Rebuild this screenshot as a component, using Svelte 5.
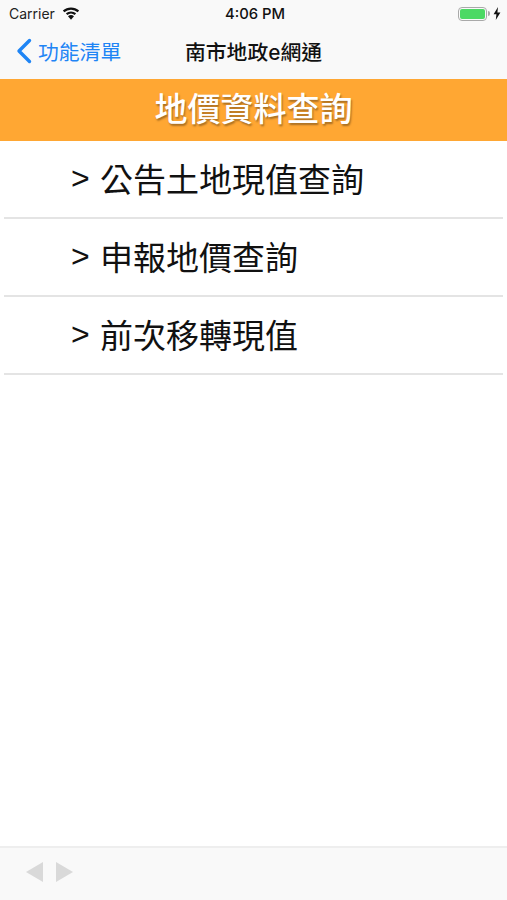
<script>
	const items = ['公告土地現值查詢', '申報地價查詢', '前次移轉現值'];
</script>

<div class="page">
	<header class="top">
		<div class="status">
			<div class="status-left">
				<span>Carrier</span>
				<svg class="wifi" width="18" height="13" viewBox="0 0 18 13" aria-hidden="true">
					<path d="M9 12.8 L12 9.2 A4.6 4.6 0 0 0 6 9.2 Z" fill="#111" />
					<path d="M4.6 7.2 A6.8 6.8 0 0 1 13.4 7.2" fill="none" stroke="#111" stroke-width="2.2" />
					<path d="M1.6 4.4 A11 11 0 0 1 16.4 4.4" fill="none" stroke="#111" stroke-width="2.2" />
				</svg>
			</div>
			<span class="time">4:06 PM</span>
			<div class="status-right">
				<div class="battery"><div class="level"></div></div>
				<div class="nub"></div>
				<svg width="8" height="13" viewBox="0 0 8 13" aria-hidden="true">
					<path d="M5 0 L0.6 7.2 H3.4 L2.8 13 L7.4 5.4 H4.4 Z" fill="#111" />
				</svg>
			</div>
		</div>
		<nav class="nav">
			<div class="back">
				<svg width="18" height="26" viewBox="0 0 18 26" aria-hidden="true">
					<path d="M14.5 2.5 L4 13 L14.5 23.5" fill="none" stroke="#1f85f5" stroke-width="3.4" stroke-linecap="round" stroke-linejoin="round" />
				</svg>
				<span>功能清單</span>
			</div>
			<div class="nav-title">南市地政e網通</div>
		</nav>
	</header>

	<h1 class="banner">地價資料查詢</h1>

	<ul class="list">
		{#each items as item}
			<li><span class="arrow">&gt;</span><span>{item}</span></li>
		{/each}
	</ul>

	<footer class="toolbar">
		<svg width="20" height="22" viewBox="0 0 20 22" aria-hidden="true"><path d="M18 1 V21 L1 11 Z" fill="#d9d9d9" /></svg>
		<svg width="20" height="22" viewBox="0 0 20 22" aria-hidden="true"><path d="M2 1 V21 L19 11 Z" fill="#d9d9d9" /></svg>
	</footer>
</div>

<style>
	:global(body) {
		margin: 0;
		background: #fff;
	}

	.page {
		height: 900px;
		display: flex;
		flex-direction: column;
		overflow: hidden;
		font-family: "Liberation Sans", "Noto Sans CJK TC", sans-serif;
		color: #000;
	}

	.top {
		background: #f9f9f9;
		height: 79px;
	}

	.status {
		height: 27px;
		display: grid;
		grid-template-columns: 1fr auto 1fr;
		align-items: center;
		padding: 0 6px 0 9px;
		font-size: 14px;
		font-family: Inter, "Liberation Sans", sans-serif;
		color: #222;
	}

	.status-left {
		display: flex;
		align-items: center;
		gap: 7px;
	}

	.time {
		font-size: 14.8px;
		font-weight: 500;
		color: #111;
	}

	.status-right {
		display: flex;
		align-items: center;
		justify-content: flex-end;
	}

	.battery {
		width: 29px;
		height: 14px;
		box-sizing: border-box;
		border: 1px solid #a9a9a9;
		border-radius: 4px;
		padding: 1px;
	}

	.level {
		height: 100%;
		background: #4cd964;
		border-radius: 2px;
	}

	.nub {
		width: 2px;
		height: 5px;
		background: #a9a9a9;
		margin: 0 3px 0 1px;
		border-radius: 0 2px 2px 0;
	}

	.nav {
		height: 52px;
		display: flex;
		align-items: center;
		padding-left: 15px;
		box-sizing: border-box;
		padding-bottom: 4px;
	}

	.back {
		width: 170px;
		display: flex;
		align-items: center;
		gap: 5px;
		color: #1f85f5;
		font-size: 20.8px;
	}

	.nav-title {
		font-family: Inter, "Noto Sans CJK TC", sans-serif;
		font-size: 20.8px;
		font-weight: 500;
		color: #111;
		white-space: nowrap;
	}

	.banner {
		margin: 0;
		height: 62px;
		background: #ffa733;
		color: #fff;
		font-size: 33px;
		font-weight: 500;
		line-height: 62px;
		text-align: center;
		text-shadow: 1px 2px 2px rgba(0, 0, 0, 0.35);
	}

	.list {
		list-style: none;
		margin: 0;
		padding: 0;
		flex: 1;
	}

	.list li {
		height: 78px;
		box-sizing: border-box;
		margin: 0 4px;
		padding: 0 0 2px 67px;
		display: flex;
		align-items: center;
		font-size: 33px;
		border-bottom: 2px solid #e4e4e4;
		color: #111;
	}

	.arrow {
		width: 29px;
		font-size: 32px;
		font-family: "Liberation Sans", sans-serif;
	}

	.toolbar {
		height: 54px;
		box-sizing: border-box;
		background: #f9f9f9;
		border-top: 2px solid #eeeeee;
		display: flex;
		align-items: center;
		gap: 9px;
		padding: 0 0 4px 25px;
	}
</style>
